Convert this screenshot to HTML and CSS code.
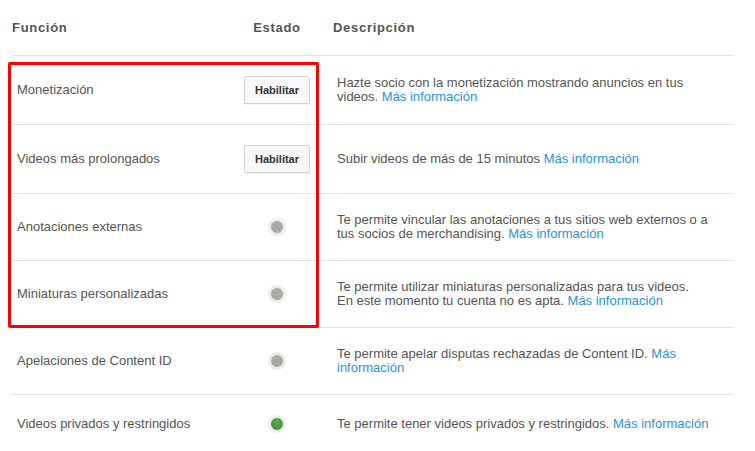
FILE: index.html
```html
<!DOCTYPE html>
<html lang="es">
<head>
    <meta charset="UTF-8">
    <title>Funciones</title>
    <link rel="stylesheet" href="styles.css">
</head>
<body>
    <div class="features">
        <div class="row head">
            <div class="col-name">Función</div>
            <div class="col-state">Estado</div>
            <div class="col-desc">Descripción</div>
        </div>

        <div class="row">
            <div class="col-name">Monetización</div>
            <div class="col-state"><button class="btn">Habilitar</button></div>
            <div class="col-desc">Hazte socio con la monetización mostrando anuncios en tus videos. <a href="#">Más información</a></div>
        </div>

        <div class="row">
            <div class="col-name">Videos más prolongados</div>
            <div class="col-state"><button class="btn">Habilitar</button></div>
            <div class="col-desc">Subir videos de más de 15 minutos <a href="#">Más información</a></div>
        </div>

        <div class="row">
            <div class="col-name">Anotaciones externas</div>
            <div class="col-state"><span class="dot"></span></div>
            <div class="col-desc">Te permite vincular las anotaciones a tus sitios web externos o a tus socios de merchandising. <a href="#">Más información</a></div>
        </div>

        <div class="row">
            <div class="col-name">Miniaturas personalizadas</div>
            <div class="col-state"><span class="dot"></span></div>
            <div class="col-desc">Te permite utilizar miniaturas personalizadas para tus videos.<br>En este momento tu cuenta no es apta. <a href="#">Más información</a></div>
        </div>

        <div class="row">
            <div class="col-name">Apelaciones de Content ID</div>
            <div class="col-state"><span class="dot"></span></div>
            <div class="col-desc">Te permite apelar disputas rechazadas de Content ID. <a href="#">Más información</a></div>
        </div>

        <div class="row last">
            <div class="col-name">Videos privados y restringidos</div>
            <div class="col-state"><span class="dot on"></span></div>
            <div class="col-desc">Te permite tener videos privados y restringidos. <a href="#">Más información</a></div>
        </div>

        <div class="highlight"></div>
    </div>
</body>
</html>
```

FILE: styles.css
```css
body{
    margin: 0;
    background-color: #fff;
    font-family: "Liberation Sans", Arial, sans-serif;
    font-size: 13px;
    color: #555;
}

.features{
    position: relative;
    width: 720px;
    margin-left: 12px;
}

.row{
    display: grid;
    grid-template-columns: 232px 66px 1fr;
    align-items: center;
    padding: 19px 0;
    min-height: 28px;
    line-height: 14px;
    border-bottom: 1px solid #e2e2e2;
}

.row.head{
    padding: 0;
    height: 55px;
    font-weight: bold;
    letter-spacing: 0.7px;
}

.row.last{
    border-bottom: none;
    padding-top: 15px;
}

.col-name{
    padding-left: 5px;
}

.head .col-name{
    padding-left: 0;
}

.col-state{
    display: flex;
    justify-content: center;
}

.col-desc{
    padding: 0 8px 0 27px;
}

.head .col-desc{
    padding-left: 23px;
}

.col-desc a{
    color: #2793e6;
    text-decoration: none;
}

.btn{
    width: 66px;
    height: 28px;
    margin: 1px 0;
    padding: 0;
    font-family: "Liberation Sans", Arial, sans-serif;
    font-size: 11px;
    font-weight: bold;
    color: #333;
    background-color: #f8f8f8;
    border: 1px solid #d3d3d3;
    border-radius: 2px;
    box-shadow: 0 1px 0 rgba(0,0,0,0.05);
}

.dot{
    width: 12px;
    height: 12px;
    border-radius: 50%;
    background-color: #a6aca4;
    border: 3px solid #ececec;
}

.dot.on{
    background: radial-gradient(circle at 50% 35%, #5aab4b, #3f8b33);
}

.highlight{
    position: absolute;
    left: -4px;
    top: 62px;
    width: 305px;
    height: 260px;
    border: 3px solid #f00;
    border-radius: 2px;
}
```
